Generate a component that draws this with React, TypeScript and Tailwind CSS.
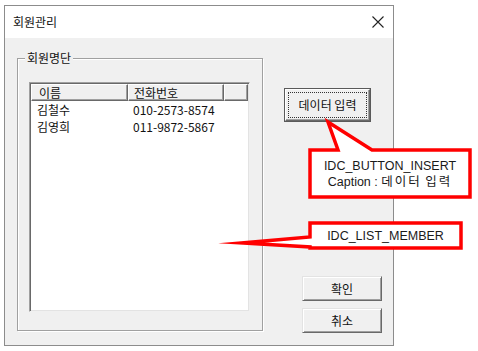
import React from "react";

const F = "font-['Noto_Sans_CJK_KR',sans-serif]";
const L = "font-['Liberation_Sans','Noto_Sans_CJK_KR',sans-serif]";

function WinButton({ label, className }: { label: string; className: string }) {
  return (
    <div
      className={`${className} flex items-center justify-center border border-t-[#e3e3e3] border-l-[#e3e3e3] border-b-[#696969] border-r-[#696969] bg-[#f0f0f0] shadow-[inset_1px_1px_0_#fff,inset_-1px_-1px_0_#a0a0a0] text-[12px] leading-[16px] text-[#111]`}
    >
      {label}
    </div>
  );
}

export default function App() {
  return (
    <div className={`relative w-[478px] h-[351px] overflow-hidden bg-white ${F}`}>
      <div className="ml-[4px] mt-[5px] w-[390px] h-[341px] border border-[#8c8c8c] flex flex-col">
        {/* title bar */}
        <div className="h-[32px] shrink-0 bg-white flex items-center justify-between pl-[8px] pr-[9px]">
          <span className="text-[12px] leading-[16px] text-[#111]">회원관리</span>
          <svg width="12" height="12" viewBox="0 0 12 12" className="block">
            <path d="M0.5 0.5 L11.5 11.5 M11.5 0.5 L0.5 11.5" stroke="#222" strokeWidth="1.1" fill="none" />
          </svg>
        </div>
        {/* body */}
        <div className="flex-1 bg-[#f0f0f0] flex items-start pl-[12px] pt-[20px]">
          {/* group box */}
          <div className="relative w-[247px] h-[274px] shrink-0 pt-[24px] pl-[12px]">
            <div className="absolute left-0 top-0 w-[246px] h-[273px] border border-[#a0a0a0] shadow-[1px_1px_0_#fff,inset_1px_1px_0_#fff]" />
            <span className="absolute left-[8px] top-[-9px] px-[2px] bg-[#f0f0f0] text-[12px] leading-[17px] text-[#111]">
              회원명단
            </span>
            {/* list control */}
            <div className="relative w-[221px] h-[230px] bg-white border border-t-[#a0a0a0] border-l-[#a0a0a0] border-b-[#f0f0f0] border-r-[#f0f0f0] shadow-[inset_1px_1px_0_#696969,inset_-1px_-1px_0_#e3e3e3] p-[1px]">
              <div className="flex h-[17px] text-[12px] leading-[15px] text-[#111]">
                <div className="w-[97px] pl-[7px] bg-[#f0f0f0] border border-t-white border-l-white border-b-[#696969] border-r-[#696969] shadow-[inset_-1px_-1px_0_#a0a0a0]">
                  이름
                </div>
                <div className="w-[96px] pl-[5px] bg-[#f0f0f0] border border-t-white border-l-white border-b-[#696969] border-r-[#696969] shadow-[inset_-1px_-1px_0_#a0a0a0]">
                  전화번호
                </div>
                <div className="flex-1 bg-[#f0f0f0] border border-t-white border-l-white border-b-[#696969] border-r-[#696969] shadow-[inset_-1px_-1px_0_#a0a0a0]" />
              </div>
              <div className="text-[12px] leading-[17px] text-[#111]">
                <div className="flex">
                  <span className="w-[97px] pl-[6px]">김철수</span>
                  <span className="pl-[5px]">010-2573-8574</span>
                </div>
                <div className="flex">
                  <span className="w-[97px] pl-[6px]">김영희</span>
                  <span className="pl-[5px]">011-9872-5867</span>
                </div>
              </div>
            </div>
          </div>
          {/* buttons */}
          <div className="flex flex-col items-start pt-[30px]">
            <div className="ml-[20px] w-[87px] h-[34px] border border-[#5a5a5a]">
              <div className="w-full h-full border border-t-white border-l-white border-b-[#696969] border-r-[#696969] shadow-[inset_-1px_-1px_0_#a0a0a0] bg-[#f0f0f0] p-[2px]">
                <div className="w-full h-full flex items-center justify-center border border-dotted border-[#333] text-[12px] leading-[16px] text-[#111]">
                  데이터 입력
                </div>
              </div>
            </div>
            <WinButton label="확인" className="ml-[38px] mt-[154px] w-[80px] h-[25px]" />
            <WinButton label="취소" className="ml-[38px] mt-[7px] w-[80px] h-[25px]" />
          </div>
        </div>
      </div>

      {/* callout shapes */}
      <svg className="absolute left-0 top-0" width="478" height="351" viewBox="0 0 478 351">
        <path
          d="M310 150 L338 150 L328 122 L372 150 L470 150 L470 197 L310 197 Z"
          fill="#fff"
          stroke="#ff0000"
          strokeWidth="3.5"
          strokeLinejoin="miter"
          strokeMiterlimit="20"
        />
        <path
          d="M310 223 L461 223 L461 248 L310 248 L310 247 L242 243 L310 237 Z"
          fill="#fff"
          stroke="#ff0000"
          strokeWidth="3.5"
          strokeLinejoin="miter"
          strokeMiterlimit="20"
        />
      </svg>
      <div className={`absolute left-[312px] top-[152px] w-[156px] h-[43px] flex flex-col items-center justify-center text-[12.5px] leading-[16px] text-[#1a1a1a] ${L}`}>
        <span>IDC_BUTTON_INSERT</span>
        <span>
          Caption : <span className="tracking-[2px]">데이터</span> <span className="tracking-[2px]">입력</span>
        </span>
      </div>
      <div className={`absolute left-[312px] top-[225px] w-[147px] h-[21px] flex items-center justify-center text-[12.5px] leading-[16px] text-[#1a1a1a] ${L}`}>
        IDC_LIST_MEMBER
      </div>
    </div>
  );
}
